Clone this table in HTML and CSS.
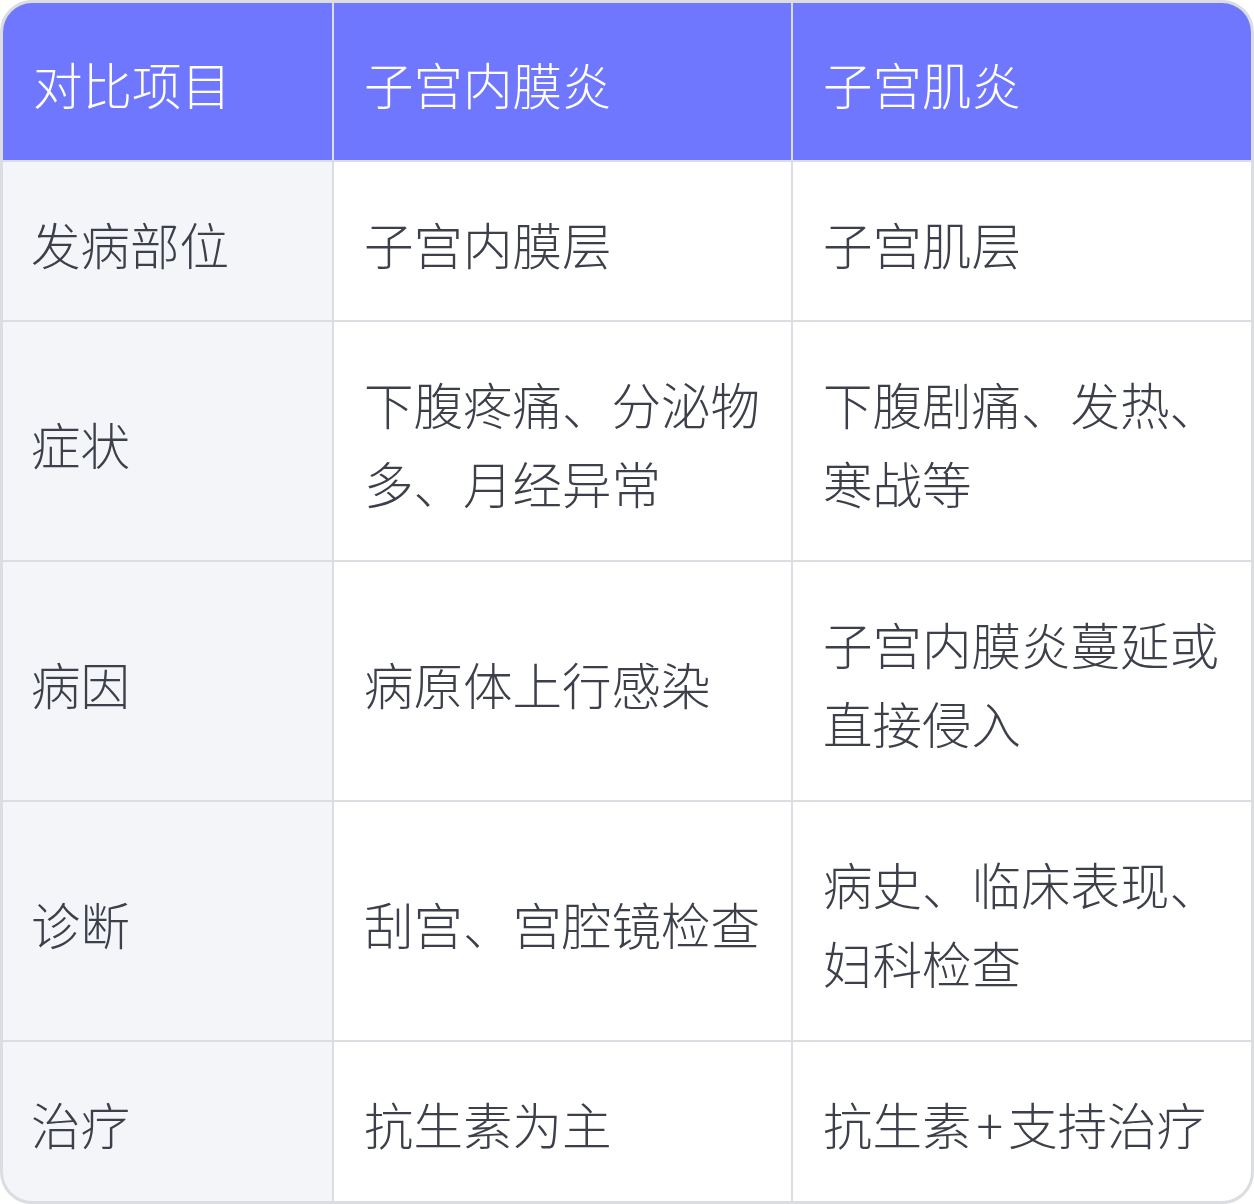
FILE: index.html
```html
<!DOCTYPE html>
<html lang="zh-CN">
<head>
<meta charset="utf-8">
<link rel="stylesheet" href="styles.css">
</head>
<body>
<div class="table">
  <div class="cell head">对比项目</div>
  <div class="cell head">子宫内膜炎</div>
  <div class="cell head">子宫肌炎</div>

  <div class="cell label">发病部位</div>
  <div class="cell">子宫内膜层</div>
  <div class="cell">子宫肌层</div>

  <div class="cell label">症状</div>
  <div class="cell">下腹疼痛、分泌物多、月经异常</div>
  <div class="cell">下腹剧痛、发热、寒战等</div>

  <div class="cell label">病因</div>
  <div class="cell">病原体上行感染</div>
  <div class="cell">子宫内膜炎蔓延或直接侵入</div>

  <div class="cell label">诊断</div>
  <div class="cell">刮宫、宫腔镜检查</div>
  <div class="cell">病史、临床表现、妇科检查</div>

  <div class="cell label">治疗</div>
  <div class="cell">抗生素为主</div>
  <div class="cell">抗生素<span class="plus">+</span>支持治疗</div>
</div>
</body>
</html>
```
FILE: styles.css
```css
html, body {
  margin: 0;
  padding: 0;
  background: #ffffff;
}

.table {
  box-sizing: border-box;
  width: 1254px;
  height: 1204px;
  display: grid;
  grid-template-columns: 329px 457px 458px;
  grid-template-rows: 157px 158px 238px 238px 238px 159px;
  gap: 2px;
  background: #dcdde3;
  border: 3px solid #dcdde3;
  border-radius: 32px;
  overflow: hidden;
  font-family: "Noto Sans CJK SC", "Noto Sans", sans-serif;
  font-size: 49.5px;
  font-weight: 300;
  line-height: 79px;
  color: #3d404b;
}

.cell {
  background: #ffffff;
  display: flex;
  align-items: center;
  padding: 4px 26px 0 30px;
  box-sizing: border-box;
}

.head {
  background: #7077ff;
  color: #ffffff;
}

.label {
  background: #f4f5f9;
  padding-left: 28px;
}

.plus {
  padding: 0 5px;
}
```
